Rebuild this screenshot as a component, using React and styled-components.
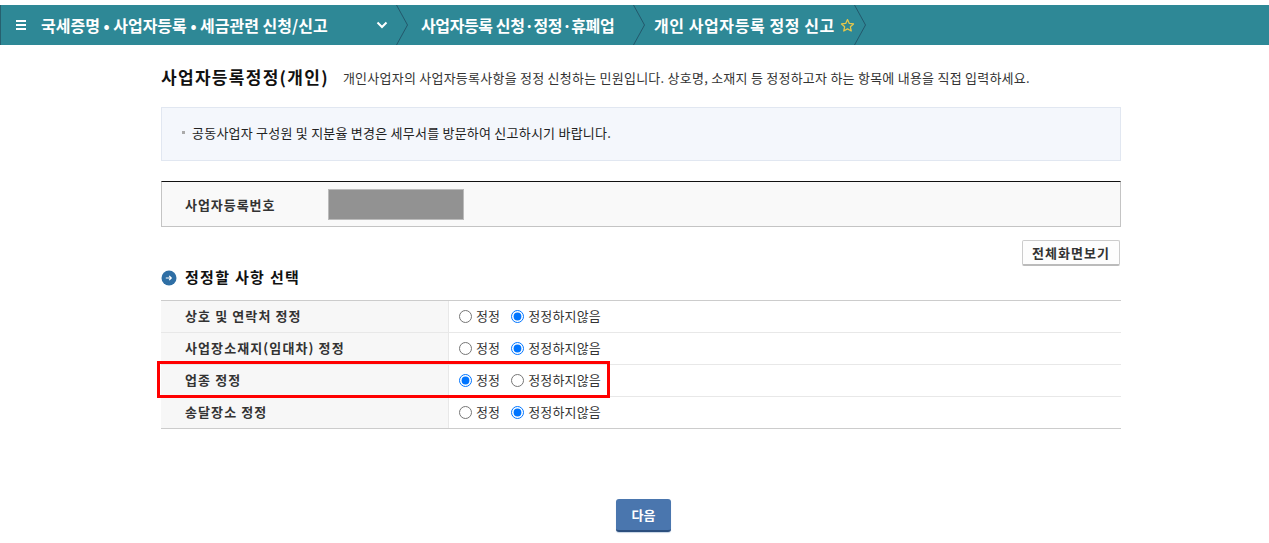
import React from 'react';
import styled, { createGlobalStyle } from 'styled-components';

const GlobalStyle = createGlobalStyle`
  html, body { margin: 0; padding: 0; background: #fff; }
  body {
    font-family: "Noto Sans CJK KR", "Liberation Sans", sans-serif;
    color: #222;
    font-size: 13px;
  }
`;

const Page = styled.div`
  padding-top: 5px;
  height: 538px;
  overflow: hidden;
`;

const TopBar = styled.div`
  display: flex;
  align-items: center;
  height: 40px;
  background: #2e8896;
  border-left: 1px solid #26606f;
  color: #fff;
  font-size: 16px;
  font-weight: 700;
  white-space: nowrap;
`;

const MenuIcon = styled.span`
  width: 10px;
  height: 10px;
  margin-left: 15px;
  border-top: 2px solid #fff;
  border-bottom: 2px solid #fff;
  box-sizing: border-box;
  position: relative;
  &::after {
    content: '';
    position: absolute;
    left: 0;
    right: 0;
    top: 2px;
    height: 2px;
    background: #fff;
  }
`;

const Crumb = styled.span`
  margin-left: ${props => props.$gap}px;
  width: ${props => props.$width}px;
  letter-spacing: ${props => props.$spacing || 0}px;
`;

const CrumbDivider = styled.svg`
  flex: none;
  width: 12px;
  height: 40px;
  margin-left: ${props => props.$gap}px;
`;

const Content = styled.main`
  width: 960px;
  margin-left: 161px;
`;

const TitleRow = styled.div`
  display: flex;
  align-items: center;
  height: 62px;
  white-space: nowrap;
`;

const Title = styled.h1`
  margin: 0;
  font-size: 17px;
  font-weight: 700;
  color: #111;
  letter-spacing: 1.3px;
`;

const TitleNote = styled.p`
  margin: 3px 0 0 14px;
  font-size: 13px;
  color: #333;
  letter-spacing: 0.24px;
`;

const Notice = styled.div`
  display: flex;
  align-items: center;
  height: 54px;
  box-sizing: border-box;
  padding: 0 0 3px 20px;
  background: #f4f7fc;
  border: 1px solid #e1e7f1;
  font-size: 13px;
  color: #222;
  letter-spacing: 0.23px;
  &::before {
    content: '';
    width: 3px;
    height: 3px;
    margin-right: 7px;
    background: #aaa;
  }
`;

const NumberBox = styled.div`
  display: flex;
  align-items: center;
  height: 46px;
  box-sizing: border-box;
  margin-top: 20px;
  padding-left: 23px;
  background: #f9f9f9;
  border: 1px solid #c4c4c4;
  border-top-color: #111;
`;

const NumberLabel = styled.span`
  width: 143px;
  font-size: 13px;
  font-weight: 700;
  color: #333;
  letter-spacing: 0.95px;
`;

const Masked = styled.div`
  width: 136px;
  height: 31px;
  box-sizing: border-box;
  background: #929292;
  border: 1px solid #bbb;
`;

const ToolRow = styled.div`
  display: flex;
  justify-content: flex-end;
  padding: 13px 1px 0 0;
`;

const ViewButton = styled.button`
  width: 98px;
  height: 26px;
  padding: 0;
  background: #fdfdfd;
  border: 1px solid #ccc;
  border-bottom: 2px solid #bbb;
  border-radius: 2px;
  font-family: inherit;
  font-size: 13px;
  font-weight: 700;
  color: #333;
  letter-spacing: 1px;
`;

const SectionHead = styled.div`
  display: flex;
  align-items: center;
  gap: 8px;
  height: 24px;
  margin: 0 0 10px;
`;

const SectionIcon = styled.svg`
  width: 16px;
  height: 16px;
`;

const SectionTitle = styled.h2`
  margin: 0 0 4px;
  font-size: 15px;
  font-weight: 700;
  color: #111;
  letter-spacing: 1.3px;
`;

const Table = styled.div`
  position: relative;
  border-top: 1px solid #ccc;
  border-bottom: 1px solid #ccc;
`;

const Row = styled.div`
  display: grid;
  grid-template-columns: 288px 1fr;
  height: 32px;
  box-sizing: border-box;
  border-bottom: 1px solid #e8e8e8;
  &:nth-of-type(4) { height: 31px; border-bottom: 0; }
`;

const RowLabel = styled.div`
  display: flex;
  align-items: center;
  padding: 0 0 2px 24px;
  background: #f7f7f7;
  border-right: 1px solid #e8e8e8;
  font-size: 13px;
  font-weight: 700;
  color: #333;
  letter-spacing: 1.1px;
`;

const RowField = styled.div`
  display: flex;
  align-items: center;
  padding: 0 0 2px 10px;
`;

const RadioLabel = styled.label`
  display: flex;
  align-items: center;
  margin-right: 11px;
  font-size: 13px;
  color: #333;
  letter-spacing: 0.15px;
`;

const Radio = styled.input`
  width: 13px;
  height: 13px;
  margin: 1px 4px 0 0;
`;

const Highlight = styled.div`
  position: absolute;
  left: -4px;
  top: 60px;
  width: 453px;
  height: 37px;
  box-sizing: border-box;
  border: 3px solid #ff0000;
  pointer-events: none;
`;

const Footer = styled.div`
  display: flex;
  justify-content: center;
  padding: 70px 0 0 5px;
`;

const NextButton = styled.button`
  width: 55px;
  height: 33px;
  padding: 0;
  background: #4a76ae;
  border: 0;
  border-bottom: 2px solid #2c4f7e;
  border-radius: 3px;
  box-shadow: 0 1px 1px #c5d3e4;
  font-family: inherit;
  font-size: 13px;
  font-weight: 700;
  color: #fff;
`;

const rows = [
  { label: '상호 및 연락처 정정', name: 'trade', fix: false },
  { label: '사업장소재지(임대차) 정정', name: 'place', fix: false },
  { label: '업종 정정', name: 'sector', fix: true },
  { label: '송달장소 정정', name: 'delivery', fix: false },
];

const Divider = ({ gap }) => (
  <CrumbDivider $gap={gap} viewBox="0 0 12 40">
    <polyline points="0.5,0 11.5,20 0.5,40" fill="none" stroke="#23586b" strokeWidth="1" />
  </CrumbDivider>
);

const App = () => (
  <Page>
    <GlobalStyle />
    <TopBar>
      <MenuIcon />
      <Crumb $gap={15} $width={335}>국세증명 • 사업자등록 • 세금관련 신청/신고</Crumb>
      <svg width="12" height="8" viewBox="0 0 12 8">
        <polyline points="1.5,1.5 6,6 10.5,1.5" fill="none" stroke="#fff" strokeWidth="2" />
      </svg>
      <Divider gap={8} />
      <Crumb $gap={13} $width={203} $spacing={-0.4}>사업자등록 신청·정정·휴폐업</Crumb>
      <Divider gap={9} />
      <Crumb $gap={9} $width={186} $spacing={0.57}>개인 사업자등록 정정 신고</Crumb>
      <svg width="15" height="15" viewBox="0 0 24 24">
        <path
          d="M12 2.5l2.9 6.2 6.7.8-5 4.6 1.4 6.7-6-3.4-6 3.4 1.4-6.7-5-4.6 6.7-.8z"
          fill="none"
          stroke="#e8c84a"
          strokeWidth="2"
          strokeLinejoin="round"
        />
      </svg>
      <Divider gap={-1} />
    </TopBar>
    <Content>
      <TitleRow>
        <Title>사업자등록정정(개인)</Title>
        <TitleNote>
          개인사업자의 사업자등록사항을 정정 신청하는 민원입니다. 상호명, 소재지 등 정정하고자 하는 항목에 내용을 직접 입력하세요.
        </TitleNote>
      </TitleRow>
      <Notice>공동사업자 구성원 및 지분율 변경은 세무서를 방문하여 신고하시기 바랍니다.</Notice>
      <NumberBox>
        <NumberLabel>사업자등록번호</NumberLabel>
        <Masked />
      </NumberBox>
      <ToolRow>
        <ViewButton type="button">전체화면보기</ViewButton>
      </ToolRow>
      <SectionHead>
        <SectionIcon viewBox="0 0 16 16">
          <circle cx="8" cy="8" r="7.5" fill="#2f6fa5" />
          <path d="M4.8 8h5.4M8.2 5.9L10.3 8 8.2 10.1" fill="none" stroke="#fff" strokeWidth="1.2" />
        </SectionIcon>
        <SectionTitle>정정할 사항 선택</SectionTitle>
      </SectionHead>
      <Table>
        {rows.map(row => (
          <Row key={row.name}>
            <RowLabel>{row.label}</RowLabel>
            <RowField>
              <RadioLabel>
                <Radio type="radio" name={row.name} defaultChecked={row.fix} />
                정정
              </RadioLabel>
              <RadioLabel>
                <Radio type="radio" name={row.name} defaultChecked={!row.fix} />
                정정하지않음
              </RadioLabel>
            </RowField>
          </Row>
        ))}
        <Highlight />
      </Table>
      <Footer>
        <NextButton type="button">다음</NextButton>
      </Footer>
    </Content>
  </Page>
);

export default App;
